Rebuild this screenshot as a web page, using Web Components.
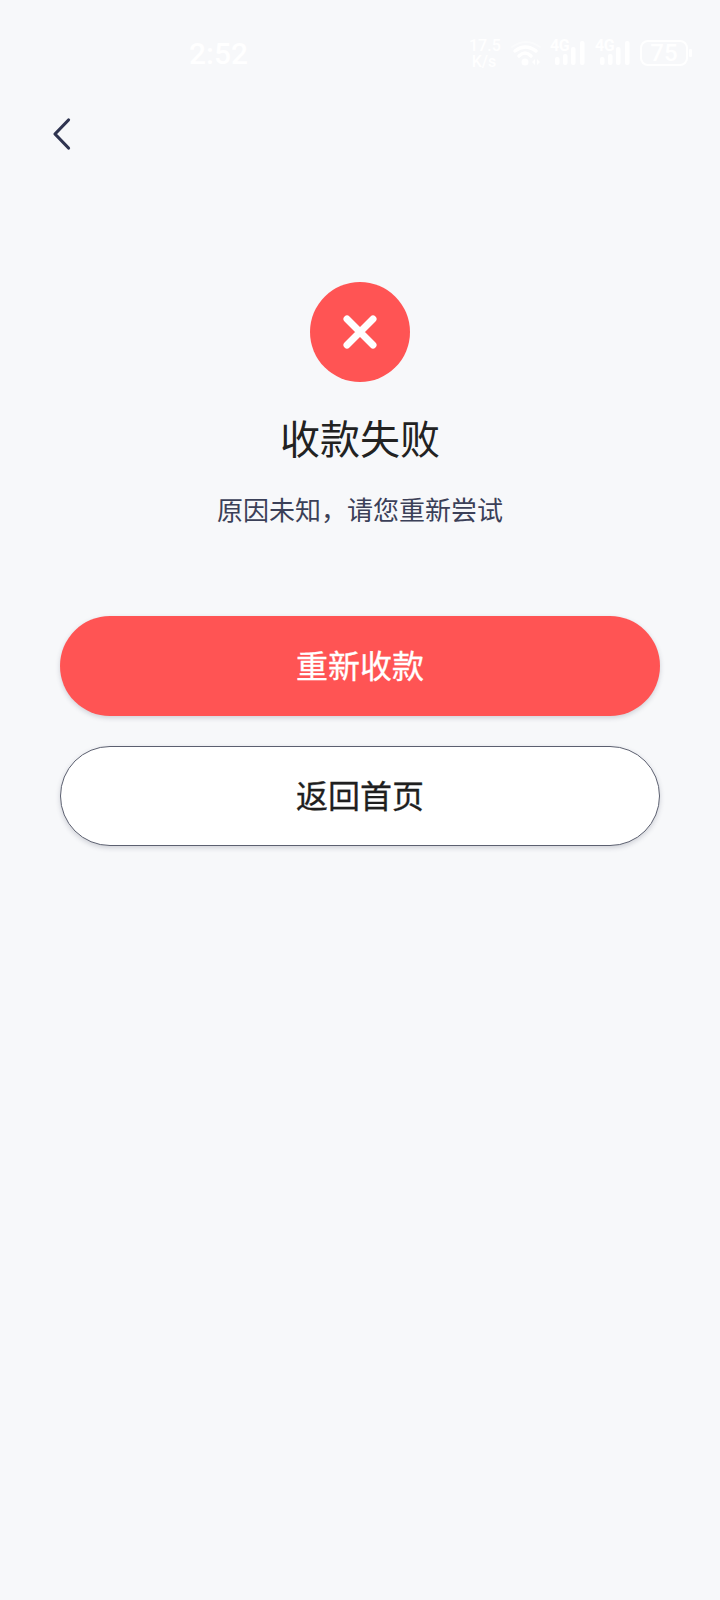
<!DOCTYPE html>
<html lang="zh"><head><meta charset="utf-8"><title>收款失败</title>
<style>html,body{margin:0;padding:0;background:#f7f8fa;height:100%}body{font-family:"Noto Sans CJK SC","Noto Sans",sans-serif}</style>
</head><body>
<result-page></result-page>
<script>
class StatusBar extends HTMLElement{constructor(){super();this.attachShadow({mode:'open'}).innerHTML=`<style>
:host{display:flex;height:26px;padding:40px 28px 0 189px;color:#fff;font-family:Roboto,sans-serif;align-items:flex-start;justify-content:space-between}
.time{font-size:30px;font-weight:500;line-height:27px;height:26px}
.r{display:flex;align-items:flex-start;height:26px}
.sp{width:30px;font-size:16px;font-weight:500;text-align:center;margin:-2px 12px 0 0}
.sp div{height:16px;line-height:16px;white-space:nowrap}
svg{display:block}
.sig{position:relative;width:35px;height:26px;margin-right:10px}
.sig span{position:absolute;left:0;top:-1px;font-size:16px;font-weight:700;line-height:14px;letter-spacing:-.5px}
.bat{display:flex;align-items:flex-start;gap:1px;width:52px;height:26px}
.bat b{display:flex;align-items:center;justify-content:center;width:48px;height:26px;box-sizing:border-box;border:2.500px solid #fff;border-radius:8px;font-size:24px;font-weight:500;line-height:1}
.bat i{display:block;margin-top:9px;width:3px;height:8px;background:#fff;border-radius:1px}
</style><span class="time">2:52</span><div class="r"><div class="sp"><div>17.5</div><div>K/s</div></div>
<svg width="32" height="26" viewBox="0 0 32 26" style="margin-right:7px" fill="none" stroke="#fff" stroke-linecap="round"><path d="M1 7Q15-3 29 7" stroke-width="2" opacity=".4"/><path d="M4 11Q14 3 25 11" stroke-width="3.500"/><path d="M8 16Q14 10 20 16" stroke-width="3.500"/><circle cx="14" cy="22" r="3.500" fill="#fff" stroke="none"/><path d="M24 19v6l-3-3zM26 19v6l3-3z" fill="#fff" stroke="none"/></svg>
${[0,1].map(()=>`<div class="sig"><span>4G</span><svg width="35" height="26" viewBox="0 0 35 26" fill="#fff"><rect x="5" y="17" width="4.500" height="8" rx="2"/><rect x="13" y="14" width="4.500" height="11" rx="2"/><rect x="21" y="7" width="4.500" height="18" rx="2"/><rect x="30" y="1" width="4.500" height="24" rx="2"/></svg></div>`).join('')}
<div class="bat"><b>75</b><i></i></div></div>`}}
customElements.define('status-bar',StatusBar);
class BackBar extends HTMLElement{constructor(){super();this.attachShadow({mode:'open'}).innerHTML=`<style>:host{display:block;padding:51px 0 0 52px;height:40px}svg{display:block}</style>
<svg width="20" height="34" viewBox="0 0 20 34" fill="none" stroke="#2f3450" stroke-width="3.200" stroke-linecap="round" stroke-linejoin="round"><path d="M16.500 3 3 17 16.500 31"/></svg>`}}
customElements.define('back-bar',BackBar);
class FailIcon extends HTMLElement{constructor(){super();this.attachShadow({mode:'open'}).innerHTML=`<style>:host{display:block;width:100px;height:100px}svg{display:block}</style>
<svg width="100" height="100" viewBox="0 0 100 100"><circle cx="50" cy="50" r="50" fill="#ff5454"/><path d="M37 37 63 63M63 37 37 63" stroke="#fff" stroke-width="7" stroke-linecap="round"/></svg>`}}
customElements.define('fail-icon',FailIcon);
class PillButton extends HTMLElement{constructor(){super();this.attachShadow({mode:'open'}).innerHTML=`<style>
:host{display:flex;align-items:center;justify-content:center;box-sizing:border-box;height:100px;width:600px;padding-bottom:5px;border-radius:50px;font-size:32px;font-weight:400;-webkit-text-stroke:.3px currentColor;box-shadow:0 2px 5px rgba(50,55,80,.2);background:#fff;color:#1f1f1f}
:host([primary]){background:#ff5454;color:#fff}
:host(:not([primary])){border:1px solid #5c6070}
</style><slot></slot>`}}
customElements.define('pill-button',PillButton);
class ResultPage extends HTMLElement{constructor(){super();this.attachShadow({mode:'open'}).innerHTML=`<style>
:host{display:block;width:720px;height:1600px;background:#f7f8fa;font-family:"Noto Sans CJK SC","Noto Sans",sans-serif}
main{display:flex;flex-direction:column;align-items:center;padding-top:125px}
h1{margin:31px 0 0;font-size:40px;font-weight:400;line-height:48px;color:#222}
p{margin:29px 0 0;font-size:26px;line-height:38px;color:#3b4058}
.btns{display:flex;flex-direction:column;gap:30px;margin-top:88px}
</style><status-bar></status-bar><back-bar></back-bar><main><fail-icon></fail-icon><h1>收款失败</h1><p>原因未知，请您重新尝试</p>
<div class="btns"><pill-button primary>重新收款</pill-button><pill-button>返回首页</pill-button></div></main>`}}
customElements.define('result-page',ResultPage);
</script>
</body></html>
